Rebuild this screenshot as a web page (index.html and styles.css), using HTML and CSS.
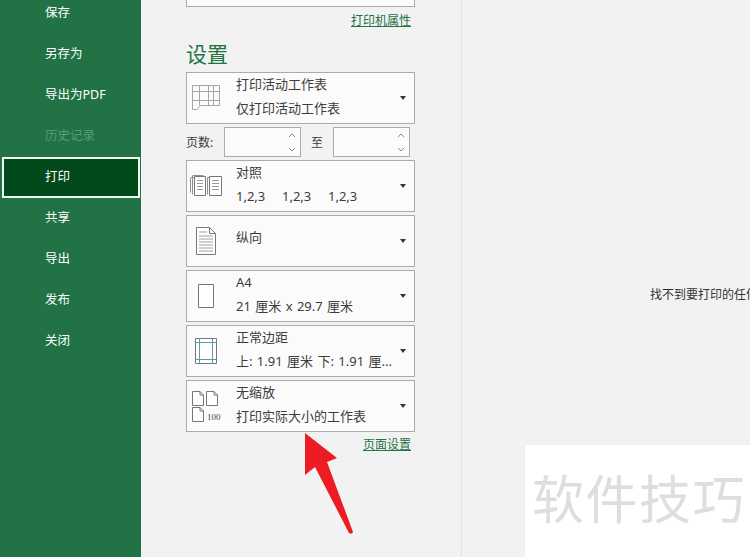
FILE: index.html
```html
<!DOCTYPE html>
<html lang="zh-CN">
<head>
  <meta charset="UTF-8">
  <title>打印</title>
  <link rel="stylesheet" href="styles.css">
</head>
<body>
  <div class="app">

    <!-- sidebar -->
    <nav class="sidebar">
      <div class="nav-item">保存</div>
      <div class="nav-item">另存为</div>
      <div class="nav-item">导出为PDF</div>
      <div class="nav-item disabled">历史记录</div>
      <div class="nav-item active">打印</div>
      <div class="nav-item">共享</div>
      <div class="nav-item">导出</div>
      <div class="nav-item">发布</div>
      <div class="nav-item">关闭</div>
    </nav>

    <!-- settings -->
    <section class="settings">
      <div class="printer-box"></div>
      <div class="link-row"><a class="link">打印机属性</a></div>
      <h2>设置</h2>

      <div class="drop">
        <svg class="icon" width="30" height="26" viewBox="0 0 30 26">
          <path d="M1.500 0.500H28.500V20.500H9L6 24.500H1.500Z M1.500 6.500H28.500 M1.500 15.500H28.500 M8.500 0.500V20.500 M17.500 0.500V20.500 M22.500 0.500V20.500" fill="none" stroke="#a5a5a5"/>
        </svg>
        <div class="drop-text">
          <div>打印活动工作表</div>
          <div>仅打印活动工作表</div>
        </div>
        <span class="caret"></span>
      </div>

      <div class="pages">
        <span class="pages-label">页数:</span>
        <div class="spin">
          <svg width="10" height="30" viewBox="0 0 10 30"><path d="M2 10L5 7L8 10 M2 21L5 24L8 21" fill="none" stroke="#8a8a8a"/></svg>
        </div>
        <span class="pages-to">至</span>
        <div class="spin">
          <svg width="10" height="30" viewBox="0 0 10 30"><path d="M2 10L5 7L8 10 M2 21L5 24L8 21" fill="none" stroke="#8a8a8a"/></svg>
        </div>
      </div>

      <div class="drop">
        <svg class="icon" width="34" height="24" viewBox="0 0 34 24">
          <path d="M1.500 4V18.500 M1.500 3.500H12.500 M3.500 2V20.500 M3.500 1.500H14.500 M18.500 4V20.500 M18.500 3.500H20.500" fill="none" stroke="#8f8f8f"/>
          <path d="M5.500 2.500H16.500V21.500H5.500Z M20.500 2.500H32.500V21.500H20.500Z" fill="#fff" stroke="#777"/>
          <path d="M8 6.500H14 M8 9.500H14 M8 12.500H14 M8 15.500H14 M23 6.500H30 M23 9.500H30 M23 12.500H30 M23 15.500H30" stroke="#9a9a9a"/>
        </svg>
        <div class="drop-text">
          <div>对照</div>
          <div class="collate"><span>1,2,3</span><span>1,2,3</span><span>1,2,3</span></div>
        </div>
        <span class="caret"></span>
      </div>

      <div class="drop">
        <svg class="icon" width="22" height="30" viewBox="0 0 22 30">
          <path d="M1.500 1.500H14.500L20.500 7.500V28.500H1.500Z M14.500 1.500V7.500H20.500" fill="#fff" stroke="#777"/>
          <path d="M4 6H12 M4 10H18 M4 13H18 M4 16H18 M4 19H18 M4 22H18 M4 25H18" stroke="#a0a0a0"/>
        </svg>
        <div class="drop-text single">
          <div>纵向</div>
        </div>
        <span class="caret"></span>
      </div>

      <div class="drop">
        <svg class="icon" width="18" height="26" viewBox="0 0 18 26">
          <path d="M1.500 1.500H16.500V24.500H1.500Z" fill="#fff" stroke="#777"/>
        </svg>
        <div class="drop-text">
          <div>A4</div>
          <div class="spaced">21 厘米 x 29.7 厘米</div>
        </div>
        <span class="caret"></span>
      </div>

      <div class="drop">
        <svg class="icon" width="24" height="28" viewBox="0 0 24 28">
          <path d="M1.500 1.500H22.500V26.500H1.500Z" fill="#fff" stroke="#777"/>
          <path d="M5.500 1.500V26.500 M18.500 1.500V26.500 M1.500 5.500H22.500 M1.500 22.500H22.500" stroke="#5b9aa8"/>
        </svg>
        <div class="drop-text">
          <div>正常边距</div>
          <div class="spaced">上: 1.91 厘米 下: 1.91 厘...</div>
        </div>
        <span class="caret"></span>
      </div>

      <div class="drop">
        <svg class="icon" width="28" height="32" viewBox="0 0 28 32">
          <path d="M0.500 1.500H8L11.500 5V15.500H0.500Z M8 1.500V5H11.500 M14.500 1.500H22L25.500 5V15.500H14.500Z M22 1.500V5H25.500 M0.500 17.500H8L11.500 21V31.500H0.500Z M8 17.500V21H11.500" fill="#fff" stroke="#777"/>
        </svg>
        <span class="icon-num">100</span>
        <div class="drop-text">
          <div>无缩放</div>
          <div>打印实际大小的工作表</div>
        </div>
        <span class="caret"></span>
      </div>

      <div class="link-row bottom"><a class="link">页面设置</a></div>
    </section>

    <!-- preview -->
    <main class="preview">
      <p class="empty-msg">找不到要打印的任何内容</p>
    </main>
  </div>

  <!-- watermark + annotation over the screenshot -->
  <div class="watermark">软件技巧</div>
  <svg class="arrow" width="60" height="110" viewBox="0 0 60 110">
    <path d="M5 3L37 28L27 32L53 102Q52 105 49 103L15 37L5 45Z" fill="#ed1c24"/>
  </svg>
</body>
</html>
```

FILE: styles.css
```css
* {
  box-sizing: border-box;
}

html, body {
  margin: 0;
  height: 100%;
  overflow: hidden;
}

body {
  font-family: "Noto Sans", "Noto Sans CJK SC", sans-serif;
  font-size: 13px;
  color: #3c3c3c;
  background: #f2f2f2;
  position: relative;
}

.app {
  display: flex;
  height: 557px;
  overflow: hidden;
}

/* sidebar */
.sidebar {
  width: 141px;
  flex: none;
  background: #217346;
  padding: 0 1px 0 2px;
  color: #fff;
  font-size: 12.5px;
  overflow: hidden;
}

.nav-item {
  height: 41px;
  line-height: 39px;
  padding-left: 43px;
  white-space: nowrap;
}

.nav-item:first-child {
  margin-top: -7px;
}

.nav-item.disabled {
  color: #5a9a75;
}

.nav-item.active {
  background: #024a1b;
  border: 2px solid #f4f8f5;
  line-height: 35px;
  padding-left: 41px;
}

/* settings */
.settings {
  width: 321px;
  flex: none;
  padding-left: 45px;
  padding-right: 46px;
  border-right: 1px solid #e1e1e1;
}

.printer-box {
  height: 52px;
  margin-top: -45px;
  background: #fbfbfb;
  border: 1px solid #ababab;
}

.link-row {
  text-align: right;
  padding: 3px 4px 0 0;
  height: 26px;
  line-height: 20px;
}

.link-row.bottom {
  height: auto;
  padding-top: 0;
  margin-top: -1px;
}

.link {
  color: #217346;
  font-size: 12px;
  text-decoration: underline;
}

h2 {
  margin: 8px 0 4px;
  font-size: 21px;
  font-weight: 400;
  line-height: 27px;
  color: #217346;
}

.drop {
  height: 52px;
  margin-bottom: 3px;
  background: #fbfbfb;
  border: 1px solid #ababab;
  display: flex;
  align-items: center;
  position: relative;
}

.icon {
  position: absolute;
  left: 19px;
  top: 50%;
  transform: translate(-50%, -50%);
}

.icon-num {
  position: absolute;
  left: 20px;
  top: 30px;
  font-family: "Liberation Serif", serif;
  font-size: 9px;
  line-height: 12px;
  color: #444;
}

.drop-text {
  flex: 1;
  padding: 0 0 4px 49px;
  line-height: 24px;
  white-space: nowrap;
  overflow: hidden;
}

.drop-text.single {
  align-self: flex-start;
  padding-top: 9px;
}

.spaced {
  word-spacing: 1px;
}

.collate {
  display: flex;
}

.collate span {
  width: 46px;
}

.caret {
  flex: none;
  margin-right: 8px;
  width: 0;
  height: 0;
  border-left: 3.5px solid transparent;
  border-right: 3.5px solid transparent;
  border-top: 4px solid #333;
}

.pages {
  display: flex;
  align-items: center;
  height: 30px;
  margin: 2px 0 3px;
  font-size: 12px;
}

.pages-label {
  width: 38px;
}

.pages-to {
  width: 32px;
  text-align: center;
}

.spin {
  width: 77px;
  height: 30px;
  background: #fbfbfb;
  border: 1px solid #ababab;
  display: flex;
  justify-content: flex-end;
  align-items: center;
  padding-right: 3px;
}

/* preview */
.preview {
  flex: 1;
  min-width: 0;
  overflow: hidden;
  padding: 287px 0 0 188px;
}

.empty-msg {
  margin: 0;
  font-size: 12px;
  line-height: 16px;
  white-space: nowrap;
  color: #333;
}

/* overlays */
.watermark {
  position: absolute;
  left: 525px;
  top: 445px;
  width: 225px;
  height: 112px;
  background: #fff;
  padding: 24px 0 0 7px;
  font-size: 52px;
  line-height: 60px;
  letter-spacing: 1.500px;
  white-space: nowrap;
  color: #dedede;
}

.arrow {
  position: absolute;
  left: 300px;
  top: 430px;
}
```
